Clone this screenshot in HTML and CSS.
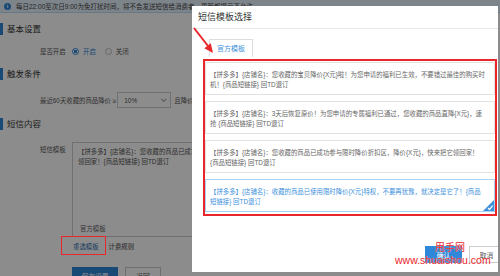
FILE: index.html
```html
<!DOCTYPE html>
<html lang="zh-CN">
<head>
  <meta charset="UTF-8" />
  <meta name="viewport" content="width=device-width, initial-scale=1" />
  <title>短信模板选择</title>
  <link rel="stylesheet" href="styles.css">
</head>
<body>

  <!-- Settings page, sits behind the mask -->
  <div class="page">
    <div class="notice">
      <span class="notice-icon">i</span>
      <span>每日22:00至次日9:00为免打扰时间，将不会发送短信给消费者，更新都提示不允许</span>
    </div>

    <h2 class="sec-title">基本设置</h2>
    <div class="row row-switch">
      <span class="label">是否开启</span>
      <label class="radio on"><i></i>开启</label>
      <label class="radio"><i></i>关闭</label>
    </div>

    <h2 class="sec-title">触发条件</h2>
    <div class="row row-cond">
      <span class="label">最近60天收藏的商品降价 ≥</span>
      <div class="select">10%<span class="caret"></span></div>
      <span class="label">且降价金额</span>
    </div>

    <h2 class="sec-title">短信内容</h2>
    <div class="row row-tpl">
      <span class="label">短信模板</span>
      <div class="tpl-box">
        <p>【拼多多】{店铺名}：您收藏的商品已成功参与限时降价折扣区，降价{X元}，快来把它<br>领回家！{商品短链接} 回TD退订</p>
        <span class="tpl-src">官方模板</span>
      </div>
    </div>
    <div class="row row-links">
      <a class="link mark">重选模板</a>
      <a class="link plain">计费规则</a>
    </div>
    <div class="row row-btns">
      <button class="btn btn-primary">保存设置</button>
      <button class="btn">返回</button>
    </div>
  </div>

  <div class="mask"></div>

  <!-- Template picker dialog -->
  <div class="dialog">
    <div class="dialog-head">短信模板选择</div>
    <div class="dialog-body">
      <div class="tabs">
        <span class="tab active">官方模板</span>
      </div>
      <div class="tpl-list">
        <div class="tpl-card">【拼多多】{店铺名}：您收藏的宝贝降价{X元}啦！为您申请的福利已生效，不要错过最佳的购买时<br>机！{商品短链接} 回TD退订</div>
        <div class="tpl-card">【拼多多】{店铺名}：3天后恢复原价！为您申请的专属福利已通过，您收藏的商品直降{X元}，速<br>抢 {商品短链接} 回TD退订</div>
        <div class="tpl-card">【拼多多】{店铺名}：您收藏的商品已成功参与限时降价折扣区，降价{X元}，快来把它领回家！<br>{商品短链接} 回TD退订</div>
        <div class="tpl-card selected">【拼多多】{店铺名}：收藏的商品已使用限时降价{X元}特权，不要再犹豫，就决定是它了！{商品<br>短链接} 回TD退订
          <span class="tick">
            <svg width="11" height="11" viewBox="0 0 11 11"><path d="M11 0V11H0Z" fill="#3d91dc"/><path d="M5 8l1.6 1.5L9.6 5.6" stroke="#fff" stroke-width="1.2" fill="none"/></svg>
          </span>
        </div>
      </div>
    </div>
    <div class="dialog-foot">
      <button class="btn btn-primary">确认</button>
      <button class="btn">取消</button>
    </div>
  </div>

  <!-- annotation arrow -->
  <svg class="arrow" width="28" height="32" viewBox="0 0 28 32">
    <line x1="4" y1="3" x2="18" y2="21" stroke="#e8262b" stroke-width="2"/>
    <polygon points="23,28 14.3,23.2 20.8,18.3" fill="#e8262b"/>
  </svg>

  <div class="watermark">
    <span class="wm-name">甩手网</span>
    <span class="wm-url">www.shuaishou.com</span>
  </div>

</body>
</html>
```

FILE: styles.css
```css
body, html {
  margin: 0; padding: 0;
  width: 500px; height: 276px;
  overflow: hidden;
  font-family: "Liberation Sans", "Noto Sans CJK SC", sans-serif;
  background: #fff;
  color: #555;
}
body {
  position: relative;
}

/* Page behind the mask */
.page {
  font-size: 6.4px;
}
.notice {
  display: flex;
  align-items: center;
  gap: 5px;
  height: 12px;
  padding-left: 4px;
  background: #e4f1fc;
  border-bottom: 1px solid #bcdcf5;
  color: #444;
  white-space: nowrap;
  font-size: 6.5px;
}
.notice-icon {
  width: 7px;
  height: 7px;
  border-radius: 50%;
  background: #2f86d6;
  color: #fff;
  font-size: 5px;
  line-height: 7px;
  text-align: center;
  font-weight: bold;
}
.sec-title {
  margin: 10px 0 0;
  height: 12px;
  line-height: 12px;
  font-size: 8.5px;
  font-weight: normal;
  color: #333;
  border-left: 3px solid #2f86d6;
  padding-left: 4px;
}
.row {
  display: flex;
  align-items: center;
  padding-left: 40px;
  white-space: nowrap;
}
.label {
  color: #555;
}
.row-switch {
  margin-top: 9px;
  height: 14px;
}
.row-switch .label {
  width: 32px;
}
.radio {
  display: flex;
  align-items: center;
  gap: 4px;
  margin-right: 9px;
  color: #555;
}
.radio i {
  width: 5px;
  height: 5px;
  border: 1px solid #bbb;
  border-radius: 50%;
  background: #fff;
}
.radio.on {
  color: #2f86d6;
}
.radio.on i {
  border-color: #2f86d6;
  background: radial-gradient(circle, #2f86d6 1.4px, #fff 1.8px);
}
.row-cond {
  margin-top: 12px;
  height: 16px;
}
.select {
  display: flex;
  align-items: center;
  justify-content: space-between;
  box-sizing: border-box;
  width: 54px;
  height: 16px;
  margin: 0 3px 0 1px;
  padding: 0 5px 0 6px;
  border: 1px solid #ccc;
  background: #fff;
  color: #555;
}
.caret {
  width: 3px;
  height: 3px;
  border-right: 1px solid #999;
  border-bottom: 1px solid #999;
  transform: rotate(45deg) translateY(-1px);
}
.row-tpl {
  margin-top: 12px;
  align-items: flex-start;
}
.row-tpl .label {
  width: 32px;
  padding-top: 3px;
  line-height: 10px;
}
.tpl-box {
  display: flex;
  flex-direction: column;
  box-sizing: border-box;
  width: 220px;
  height: 95px;
  padding: 4px 5px 2px;
  border: 1px solid #ccc;
  background: #fff;
  line-height: 10px;
  color: #555;
}
.tpl-box p {
  margin: 0;
}
.tpl-src {
  margin-top: auto;
  padding-left: 2px;
  color: #666;
}
.row-links {
  margin-top: 2px;
  height: 14px;
  padding-left: 73px;
}
.link {
  margin-right: 10px;
  color: #2f6fae;
}
.link.plain {
  color: #444;
}
.mark {
  position: relative;
}
/* red annotation box, drawn above the mask */
.mark::after {
  content: '';
  position: absolute;
  left: -12px;
  right: -7px;
  top: -6px;
  bottom: -4px;
  border: 1.5px solid #e8262b;
  z-index: 3;
}
.row-btns {
  margin-top: 14px;
  gap: 7px;
  padding-left: 72px;
}
.btn {
  height: 18px;
  padding: 0;
  border: 1px solid #ccc;
  background: #fff;
  color: #555;
  font-family: inherit;
  font-size: 6.8px;
}
.row-btns .btn-primary {
  width: 46px;
}
.row-btns .btn {
  min-width: 36px;
}
.btn-primary {
  background: #2e87d8;
  border-color: #2e87d8;
  color: #fff;
}

.mask {
  position: absolute;
  inset: 0;
  background: rgba(0, 0, 0, 0.45);
  z-index: 1;
}

/* Dialog */
.dialog {
  position: absolute;
  left: 192px;
  top: 6px;
  width: 306px;
  height: 266px;
  display: flex;
  flex-direction: column;
  background: #fff;
  overflow: hidden;
  z-index: 2;
}
.dialog-head {
  height: 22px;
  line-height: 22px;
  padding-left: 6px;
  border-bottom: 1px solid #e8e8e8;
  font-size: 9px;
  color: #333;
}
.dialog-body {
  padding: 10px 1px 0 11px;
}
.tabs {
  display: flex;
  padding-left: 6px;
}
.tab {
  box-sizing: border-box;
  width: 44px;
  height: 18px;
  line-height: 17px;
  text-align: center;
  border: 1px solid #ddd;
  border-bottom: none;
  font-size: 7px;
  color: #3d91dc;
}
.tpl-list {
  margin-top: 2px;
  height: 157px;
  box-sizing: border-box;
  padding: 1px 0 2px;
  border: 2px solid #e8262b;
}
.tpl-card {
  position: relative;
  box-sizing: border-box;
  height: 33px;
  margin-bottom: 6px;
  padding: 7px 4px 0;
  border: 1px solid #e2e2e2;
  font-size: 6.4px;
  line-height: 10px;
  color: #666;
  white-space: nowrap;
}
.tpl-card:last-child {
  margin-bottom: 0;
}
.tpl-card.selected {
  border-color: #a8d1f3;
  color: #3d91dc;
}
.tick {
  position: absolute;
  right: 0;
  bottom: 0;
  width: 11px;
  height: 11px;
}
.tick svg {
  display: block;
}
.dialog-foot {
  display: flex;
  justify-content: flex-end;
  gap: 7px;
  margin-top: auto;
  padding-bottom: 9px;
  margin-right: -6px;
}
.dialog-foot .btn {
  height: 17px;
  width: 35px;
  flex-shrink: 0;
}
.dialog-foot .btn-primary {
  width: 37px;
}

/* annotation arrow and site watermark */
.arrow {
  position: absolute;
  left: 190px;
  top: 25px;
  z-index: 3;
}
.watermark {
  position: absolute;
  left: 395px;
  top: 240px;
  width: 100px;
  z-index: 3;
  color: #e8262b;
  text-shadow: 0 0 1px #fff;
}
.wm-name {
  display: block;
  margin-left: 40px;
  font-size: 10px;
  line-height: 14px;
  font-family: "Noto Sans CJK SC", sans-serif;
}
.wm-url {
  display: block;
  font-size: 10.5px;
  line-height: 12px;
}
```
